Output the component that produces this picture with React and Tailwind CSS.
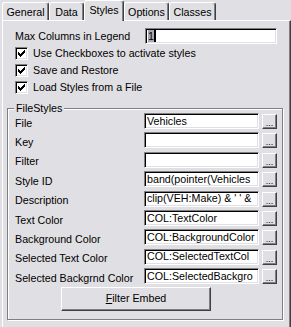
const sunken =
  'border border-t-[#808080] border-l-[#808080] border-b-white border-r-white bg-white shadow-[inset_1px_1px_0_#000,inset_-1px_-1px_0_#e0dfe3]';
const raised =
  'border border-t-white border-l-white border-b-[#404040] border-r-[#404040] bg-[#e0dfe3] shadow-[inset_-1px_-1px_0_#808080]';

const tabs = [
  { label: 'General', w: 'w-[47px]' },
  { label: 'Data', w: 'w-[35px]' },
  { label: 'Styles', w: 'w-[40px]', active: true },
  { label: 'Options', w: 'w-[45px]' },
  { label: 'Classes', w: 'w-[47px]' },
];

const checks = ['Use Checkboxes to activate styles', 'Save and Restore', 'Load Styles from a File'];

const rows = [
  ['File', 'Vehicles'],
  ['Key', ''],
  ['Filter', ''],
  ['Style ID', 'band(pointer(Vehicles'],
  ['Description', "clip(VEH:Make) & ' ' &"],
  ['Text Color', 'COL:TextColor'],
  ['Background Color', 'COL:BackgroundColor'],
  ['Selected Text Color', 'COL:SelectedTextCol'],
  ['Selected Backgrnd Color', 'COL:SelectedBackgro'],
];

function Tab({ label, w, active }) {
  if (active) {
    return (
      <div className={`relative z-10 -mb-px flex h-[21px] items-center justify-center rounded-t-[3px] border-l border-t border-r border-white border-r-[#404040] bg-[#e0dfe3] pb-[1px] shadow-[inset_-1px_0_0_#808080] ${w}`}>
        {label}
      </div>
    );
  }
  return (
    <div className={`flex h-[18px] items-center justify-center rounded-t-[3px] border-l border-t border-r border-white border-r-[#404040] pt-[1px] shadow-[inset_-1px_0_0_#808080] ${w}`}>
      {label}
    </div>
  );
}

function CheckMark() {
  return (
    <svg width="7" height="7" viewBox="0 0 7 7" shapeRendering="crispEdges">
      <path
        fill="#000"
        d="M6 0h1v1h-1z M5 1h2v1h-2z M0 2h1v1h-1z M4 2h3v1h-3z M0 3h2v1h-2z M3 3h3v1h-3z M0 4h5v1h-5z M1 5h3v1h-3z M2 6h1v1h-1z"
      />
    </svg>
  );
}

export default function App() {
  return (
    <div className="h-[327px] w-[291px] overflow-hidden bg-[#e0dfe3] text-[10.7px] leading-none text-black" style={{ fontFamily: '"Liberation Sans", Arial, sans-serif' }}>
      <div className="flex h-[20px] items-end pl-[2px]">
        {tabs.map(t => (
          <Tab key={t.label} {...t} />
        ))}
      </div>

      <div className="ml-[2px] h-[307px] w-[289px] border-l border-t border-r border-white border-r-[#404040] shadow-[inset_-1px_0_0_#808080]">
        <div className="mt-[7px] flex h-[16px] items-center pl-[12px]">
          <span className="w-[130px]">Max Columns in Legend</span>
          <div className={`${sunken} flex h-[16px] w-[132px] items-center pl-[2px]`}>
            <span className="bg-[#a8a8b0] leading-[12px]">1</span>
            <span className="h-[12px] w-[2px] bg-black" />
          </div>
        </div>

        <div className="mt-[1px]">
          {checks.map(c => (
            <div key={c} className="flex h-[17px] items-center gap-[5px] pl-[12px]">
              <div className={`${sunken} flex h-[13px] w-[13px] items-center justify-center`}>
                <CheckMark />
              </div>
              <span>{c}</span>
            </div>
          ))}
        </div>

        <div className="ml-[4px] mt-[12px] w-[276px] border border-[#808080] pb-[8px] shadow-[inset_1px_1px_0_#fff,1px_1px_0_#fff]">
          <div className="-mt-[7px] ml-[6px] w-fit bg-[#e0dfe3] px-[2px] leading-[12px]">FileStyles</div>
          <div className="-mt-[1px]">
            {rows.map(([label, value]) => (
              <div key={label} className="flex h-[19.4px] pl-[7px]">
                <span className="mt-[2px] flex h-[16px] w-[129px] items-center whitespace-nowrap">{label}</span>
                <div className={`${sunken} flex h-[16px] w-[115px] items-center overflow-hidden whitespace-nowrap pl-[2px]`}>
                  {value}
                </div>
                <div className={`${raised} ml-[3px] mt-[1px] flex h-[15px] w-[15px] items-end justify-center pb-[2px] text-[9px] leading-[6px]`}>
                  ...
                </div>
              </div>
            ))}
          </div>
          <div className={`${raised} -mt-[1px] ml-[53px] flex h-[24px] w-[150px] items-center justify-center`}>
            <span>
              <span className="underline">F</span>ilter Embed
            </span>
          </div>
        </div>
      </div>
    </div>
  );
}
